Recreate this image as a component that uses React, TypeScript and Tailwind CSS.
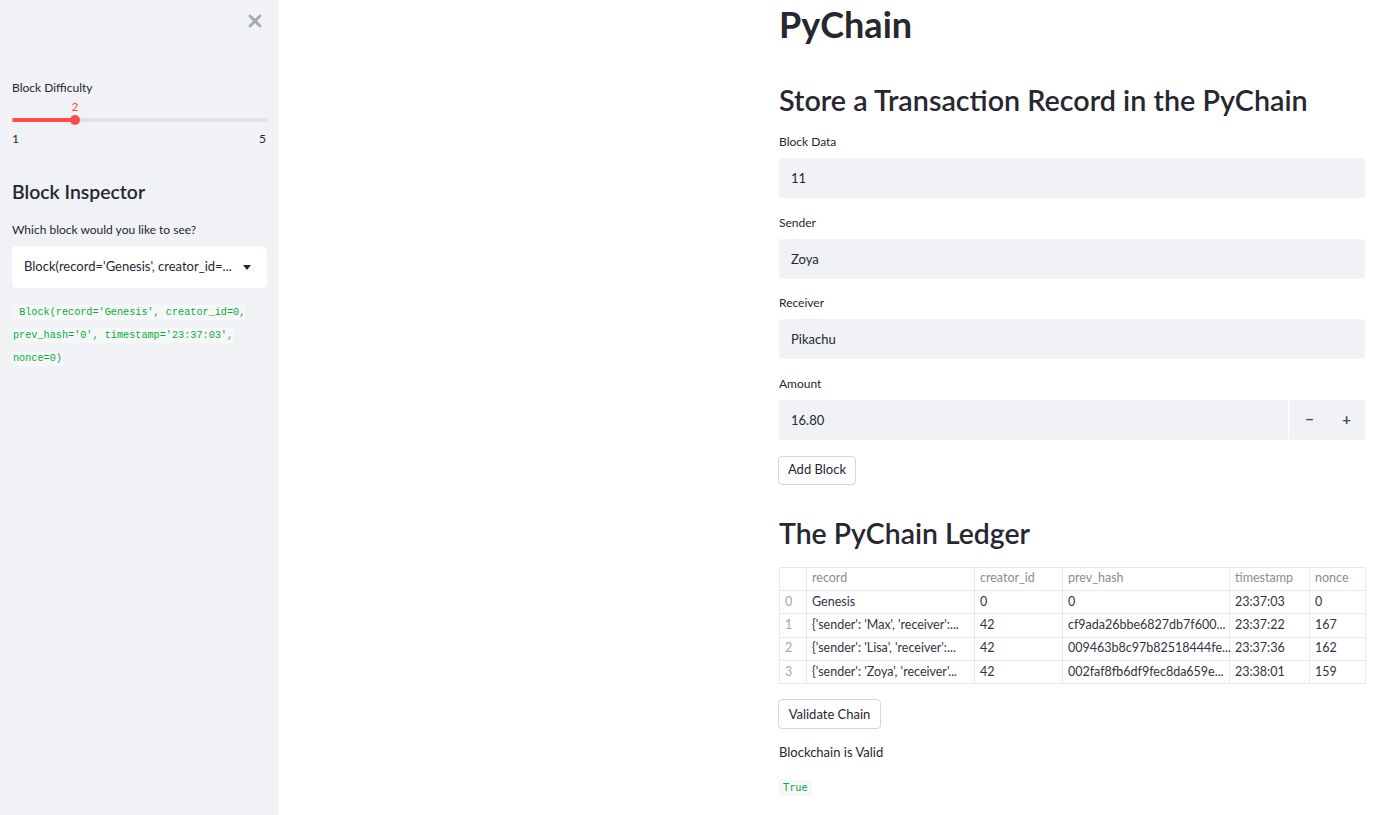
import { FC } from "react";

// Ledger rows shown in the table
const rows = [
  { i: "0", record: "Genesis", creator: "0", hash: "0", ts: "23:37:03", nonce: "0" },
  { i: "1", record: "{'sender': 'Max', 'receiver':...", creator: "42", hash: "cf9ada26bbe6827db7f600...", ts: "23:37:22", nonce: "167" },
  { i: "2", record: "{'sender': 'Lisa', 'receiver':...", creator: "42", hash: "009463b8c97b82518444fe...", ts: "23:37:36", nonce: "162" },
  { i: "3", record: "{'sender': 'Zoya', 'receiver'...", creator: "42", hash: "002faf8fb6df9fec8da659e...", ts: "23:38:01", nonce: "159" },
];

const Field: FC<{ label: string; value: string; first?: boolean }> = ({ label, value, first }) => (
  <div className={first ? "mt-[15px]" : "mt-[16.5px]"}>
    <div className="h-4 text-[12px] leading-4 text-[#262730]">{label}</div>
    <div className="mt-2 flex h-10 items-center rounded-[4px] bg-[#f0f2f6] px-3 pt-[2px] text-[13px] text-[#262730]">{value}</div>
  </div>
);

const Sidebar: FC = () => (
  <aside className="w-[279px] shrink-0 bg-[#f0f2f6] px-3">
    {/* close button */}
    <div className="flex h-[42px] justify-end pr-[5px] pt-[14px]">
      <svg width="14" height="14" viewBox="0 0 14 14">
        <path d="M2 2 L12 12 M12 2 L2 12" stroke="#a3a8b4" strokeWidth="2.8" strokeLinecap="round" />
      </svg>
    </div>

    <div className="mt-[38px] h-4 text-[12px] leading-4 text-[#262730]">Block Difficulty</div>

    {/* slider */}
    <div className="relative mt-[3px] h-[46px]">
      <div className="absolute left-[63px] top-0 -translate-x-1/2 text-[12px] leading-4 text-[#ff4b4b]">2</div>
      <div className="absolute left-0 right-0 top-[19px] h-1 rounded-full bg-[#dfe2e8]" />
      <div className="absolute left-0 top-[19px] h-1 w-[63px] rounded-full bg-[#ff4b4b]" />
      <div className="absolute left-[58px] top-[16px] h-[10px] w-[10px] rounded-full bg-[#ff4b4b]" />
      <div className="absolute left-0 top-[32px] text-[12px] leading-4 text-[#262730]">1</div>
      <div className="absolute right-[1px] top-[32px] text-[12px] leading-4 text-[#262730]">5</div>
    </div>

    <h3 className="mt-[34px] text-[19.4px] font-semibold leading-[26px] text-[#262730]">Block Inspector</h3>
    <div className="mt-[17px] h-4 text-[12px] leading-4 text-[#262730]">Which block would you like to see?</div>

    {/* select */}
    <div className="mt-2 flex h-[42px] items-center justify-between rounded-[5px] bg-white pl-3 pr-[16px] text-[13px] text-[#262730]">
      <span>Block(record='Genesis', creator_id=...</span>
      <svg width="8" height="5" viewBox="0 0 8 5">
        <path d="M0 0 L8 0 L4 5 Z" fill="#262730" />
      </svg>
    </div>

    {/* inspected block */}
    <div className="mt-[13px] pr-1 font-['DejaVu_Sans_Mono',monospace] text-[10.2px] leading-[22px] text-[#09ab3b]">
      <code className="box-decoration-clone rounded-[2px] bg-[#f6f7f9] px-[1px] py-[2px]">
        {"\u00a0"}Block(record='Genesis', creator_id=0, prev_hash='0', timestamp='23:37:03', nonce=0)
      </code>
    </div>
  </aside>
);

const Button: FC<{ label: string; w: string; h: string }> = ({ label, w, h }) => (
  <button className={`ml-[-1px] flex ${w} ${h} items-center justify-center rounded-[4px] border border-[#d6d6d9] bg-white text-[13px] text-[#262730]`}>
    {label}
  </button>
);

const App: FC = () => {
  const cell = "border border-[#e6e9ef] px-[5px] whitespace-nowrap";
  return (
    <div className="flex h-[815px] w-[1400px] overflow-hidden bg-white font-['Lato',sans-serif] text-[#262730]">
      <Sidebar />
      <main className="flex-1 pl-[500px]">
        <div className="w-[586px]">
          <h1 className="mt-[2px] text-[36px] font-bold leading-[44px]">PyChain</h1>
          <h2 className="mt-[35px] text-[28.7px] font-semibold leading-[38px]">Store a Transaction Record in the PyChain</h2>

          <Field label="Block Data" value="11" first />
          <Field label="Sender" value="Zoya" />
          <Field label="Receiver" value="Pikachu" />

          {/* number input */}
          <div className="mt-[16.5px]">
            <div className="h-4 text-[12px] leading-4">Amount</div>
            <div className="mt-2 flex h-10 rounded-[4px] bg-[#f0f2f6] text-[13px]">
              <div className="flex flex-1 items-center border-r border-white px-3 pt-[2px]">16.80</div>
              <div className="flex w-[76px] items-center justify-around pl-[2px] text-[15px] font-bold text-[#4a4c57]">
                <span>−</span>
                <span>+</span>
              </div>
            </div>
          </div>

          <div className="mt-4">
            <Button label="Add Block" w="w-[78px]" h="h-[29px]" />
          </div>

          <h2 className="mt-[29px] text-[28.4px] font-semibold leading-[38px]">The PyChain Ledger</h2>

          {/* ledger table */}
          <table className="mt-[15px] w-[586px] table-fixed border-collapse text-[12.5px]">
            <colgroup>
              <col className="w-[27px]" />
              <col className="w-[168px]" />
              <col className="w-[88px]" />
              <col className="w-[167px]" />
              <col className="w-[80px]" />
              <col className="w-[56px]" />
            </colgroup>
            <thead>
              <tr className="h-[23.4px] text-[#8b8d96]">
                <th className={cell} />
                {["record", "creator_id", "prev_hash", "timestamp", "nonce"].map((h) => (
                  <th key={h} className={`${cell} text-left font-normal`}>{h}</th>
                ))}
              </tr>
            </thead>
            <tbody>
              {rows.map((r) => (
                <tr key={r.i} className="h-[23.4px] text-[#31333f]">
                  <td className={`${cell} text-[#a4a6ad]`}>{r.i}</td>
                  <td className={cell}>{r.record}</td>
                  <td className={cell}>{r.creator}</td>
                  <td className={cell}>{r.hash}</td>
                  <td className={cell}>{r.ts}</td>
                  <td className={cell}>{r.nonce}</td>
                </tr>
              ))}
            </tbody>
          </table>

          <div className="mt-[15px]">
            <Button label="Validate Chain" w="w-[103px]" h="h-[30px]" />
          </div>

          <p className="mt-[14px] text-[13px] leading-[18px]">Blockchain is Valid</p>

          <code className="mt-[19px] inline-block rounded-[2px] bg-[#f6f7f9] px-[4px] font-['DejaVu_Sans_Mono',monospace] text-[10.2px] leading-4 text-[#09ab3b]">
            True
          </code>
        </div>
      </main>
    </div>
  );
};

export default App;
